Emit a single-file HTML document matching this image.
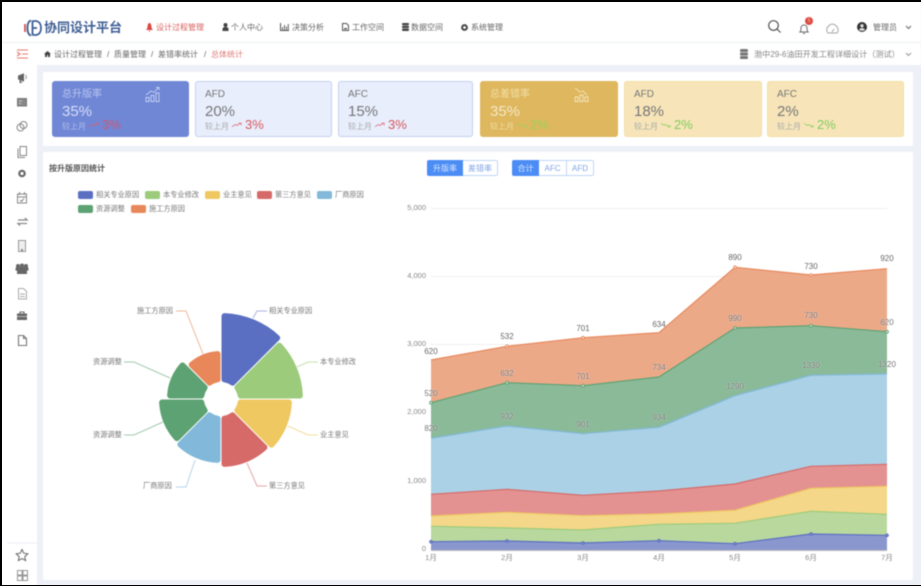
<!DOCTYPE html>
<html lang="zh"><head><meta charset="utf-8"><title>总体统计</title>
<style>
html,body{margin:0;padding:0;width:921px;height:586px;overflow:hidden;background:#000}
#w{position:absolute;left:2px;top:2px;width:919px;height:583px;background:#eef0f8;overflow:hidden;}
#a{position:absolute;left:-2px;top:-2px;width:921px;height:586px;filter:blur(.55px);font-family:"Liberation Sans","Noto Sans CJK SC",sans-serif;color:#666}
.b{position:absolute}
.t{position:absolute;white-space:nowrap;line-height:1}
.c{transform:translateX(-50%)}
.n{font-size:8px;color:#666}
.card{position:absolute;top:81px;width:137px;height:56px;box-sizing:border-box;border-radius:3px}
.blue{background:#e8eefc;box-shadow:inset 0 0 0 1px #c4d0ee}
.gold{background:#f7e5b9;box-shadow:inset 0 0 0 1px #f3dea6}
.l{font-size:10px;color:#777;left:10px;top:8.500px}
.v{font-size:15px;color:#777;left:10px;top:22.500px}
.m{font-size:8px;color:#aaa;left:10px;top:41.500px}
.p{font-size:13px;left:50px;top:37px}
.up{color:#d9585c}.dn{color:#82cc5e}
.ar{position:absolute;left:37px;top:41px}
.btn{position:absolute;top:160px;height:16px;box-sizing:border-box;border:1px solid #bfd6f7;font-size:8px;line-height:15px;text-align:center;color:#7fa3e6;background:#fff}
.on{background:#4c8df5;color:#dbe8fd;border-color:#4c8df5}
.ax{font-size:7.500px;color:#888}
.lg{font-size:7.200px;color:#777}
.sw{position:absolute;width:15px;height:8px;border-radius:2px}
.dl{color:#777;font-size:8px;text-shadow:0 0 1.500px rgba(255,255,255,.85)}
svg{position:absolute;overflow:visible}
</style></head><body>
<div id="w"><div id="a">
<!-- header -->
<div class="b" style="left:2px;top:2px;width:919px;height:40px;background:#fff;border-bottom:1px solid #eceef3"></div>
<div class="b" style="left:2px;top:43px;width:35px;height:542px;background:#fff"></div>
<div class="b" style="left:37px;top:43px;width:884px;height:22px;background:#fff"></div>
<svg style="left:24px;top:19px" width="18" height="18" viewBox="0 0 18 18" fill="none"><path d="M1 5V13" stroke="#d9534f" stroke-width="1.800"/><path d="M7 1.500C4.500 2 3.500 5 3.500 9s1 7 3.500 7.500" stroke="#3d5f96" stroke-width="1.800"/><path d="M8.500 1.500V16.500M9 2h2c5 0 6 4 6 7s-1 7-6 7H9M9 9h4" stroke="#3d5f96" stroke-width="1.800"/></svg>
<div class="t" style="left:44px;top:21px;font-size:13px;font-weight:700;color:#3f5f95">协同设计平台</div>
<svg style="left:146px;top:23px" width="7" height="9" viewBox="0 0 7 9"><path d="M3.500 0C2 0 1.700 2 1.500 4S.5 6 .2 7h6.600c-.3-1-1.100-1-1.300-3S5 0 3.500 0zM2.500 7.700h2L3.500 9z" fill="#d9483f"/></svg>
<div class="t n" style="left:156px;top:23.500px;color:#d9605c">设计过程管理</div>
<svg style="left:222px;top:23px" width="7" height="8" viewBox="0 0 7 8"><circle cx="3.500" cy="2" r="2" fill="#444"/><path d="M.5 8V6C.5 4.500 2 4 3.500 4s3 .5 3 2v2z" fill="#444"/></svg>
<div class="t n" style="left:231px;top:23.500px">个人中心</div>
<svg style="left:280px;top:23px" width="9" height="8" viewBox="0 0 9 8"><path d="M.5 0V7.500H9" stroke="#555" fill="none"/><path d="M2 7V4h1v3zM4 7V2h1v5zM6 7V3.500h1V7zM7.800 7V1h1v6z" fill="#666"/></svg>
<div class="t n" style="left:292px;top:23.500px">决策分析</div>
<svg style="left:342px;top:23px" width="7" height="8" viewBox="0 0 7 8"><path d="M.5.500h4l2 2V7.500H.5z" fill="#fff" stroke="#555"/><path d="M1.500 6.500l1.500-2 1 1 1-1v2z" fill="#555"/></svg>
<div class="t n" style="left:352px;top:23.500px">工作空间</div>
<svg style="left:402px;top:23px" width="7" height="8" viewBox="0 0 7 8"><rect width="7" height="2.300" rx="1" fill="#444"/><rect y="2.800" width="7" height="2.300" rx="1" fill="#444"/><rect y="5.600" width="7" height="2.400" rx="1" fill="#444"/></svg>
<div class="t n" style="left:411px;top:23.500px">数据空间</div>
<svg style="left:461px;top:24px" width="7" height="7" viewBox="0 0 7 7"><circle cx="3.500" cy="3.500" r="2.400" fill="none" stroke="#444" stroke-width="2"/></svg>
<div class="t n" style="left:471px;top:23.500px">系统管理</div>
<!-- right header -->
<svg style="left:768px;top:20px" width="14" height="14" viewBox="0 0 14 14" fill="none" stroke="#555" stroke-width="1.200"><circle cx="5.500" cy="5.500" r="4.800"/><path d="M9 9l3.500 3.500"/></svg>
<svg style="left:799px;top:23px" width="10" height="12" viewBox="0 0 10 12" fill="none" stroke="#666"><path d="M1 9c1-1 1-2 1-4s1.500-3 3-3 3 1 3 3 0 3 1 4zM4 10.500h2"/></svg>
<div class="b" style="left:805px;top:17px;width:8px;height:8px;border-radius:50%;background:#dc4a3c;color:#fbc;font-size:5px;line-height:8px;text-align:center">5</div>
<svg style="left:826px;top:23px" width="13" height="11" viewBox="0 0 13 11" fill="none" stroke="#a5a5a5" stroke-width="1"><path d="M2 10C0 8 .5 4 3 3c1-2 5-3 7 0 2 1 3 5 1 7z"/><path d="M6 9l2-3M4 10h5" /></svg>
<svg style="left:857px;top:22px" width="10" height="10" viewBox="0 0 10 10"><circle cx="5" cy="5" r="5" fill="#333"/><circle cx="5" cy="3.800" r="1.700" fill="#ddd"/><path d="M2 8c.5-1.500 1.800-2 3-2s2.500.5 3 2c-1.500 1-4.500 1-6 0z" fill="#ddd"/></svg>
<div class="t n" style="left:873px;top:23.500px;color:#666">管理员</div>
<svg style="left:905px;top:25px" width="7" height="5" viewBox="0 0 7 5" fill="none" stroke="#666"><path d="M1 1l2.500 2.500L6 1"/></svg>
<!-- breadcrumb -->
<svg style="left:44px;top:51px" width="7" height="6" viewBox="0 0 7 6"><path d="M3.500 0L7 3H6v3H4V4H3v2H1V3H0z" fill="#444"/></svg>
<div class="t n" style="left:54px;top:50.500px">设计过程管理</div><div class="t n" style="left:107px;top:50.500px">/</div>
<div class="t n" style="left:114px;top:50.500px">质量管理</div><div class="t n" style="left:151px;top:50.500px">/</div>
<div class="t n" style="left:158px;top:50.500px">差错率统计</div><div class="t n" style="left:204px;top:50.500px">/</div>
<div class="t n" style="left:211px;top:50.500px;color:#dc7b76">总体统计</div>
<svg style="left:740px;top:49px" width="8" height="10" viewBox="0 0 8 10"><rect width="8" height="3" rx="1.300" fill="#777"/><rect y="3.500" width="8" height="3" rx="1" fill="#777"/><rect y="7" width="8" height="3" rx="1.300" fill="#777"/></svg>
<div class="t" style="left:754px;top:50.500px;font-size:8.100px;color:#888">渤中29-6油田开发工程详细设计（测试）</div>
<svg style="left:905px;top:52px" width="7" height="5" viewBox="0 0 7 5" fill="none" stroke="#999"><path d="M1 1l2.500 2.500L6 1"/></svg>
<!-- sidebar -->
<svg style="left:0;top:0" width="44" height="586" fill="none" stroke="#777" stroke-width="1">
<g stroke="#e8776e"><path d="M17 50h11M22 54h6M17 58h11M17 52l3 2-3 2" stroke-width="1.100"/></g>
<path d="M18.500 76v3l5 2v-7zM20 80v2.500h2" fill="#666" stroke="#666"/><path d="M25.500 75c1.200 1 1.200 3 0 4" stroke="#999"/>
<rect x="17.500" y="98.500" width="9" height="7.500" fill="#888" stroke="#777"/><path d="M19 101h3M19 103.500h2" stroke="#ddd" stroke-width=".8"/>
<circle cx="20.500" cy="127.500" r="3.500" stroke="#888"/><circle cx="23.500" cy="125" r="3.500" stroke="#888"/>
<path d="M20 146.500h6.500v9H20z" stroke="#888"/><path d="M18 148.500v9h7" stroke="#888"/>
<circle cx="22" cy="173.500" r="2.700" stroke-width="2.200" stroke="#666"/>
<path d="M17.500 194h9v9h-9zM19.500 192v3M24.500 192v3M17.500 197h9M20 200l1.500 1.500 2.500-3" stroke="#888"/>
<path d="M18 220h9l-2-2M27 223.500h-9l2 2" stroke-width="1.300" stroke="#888"/>
<path d="M18.500 240.500h7v11h-7z" stroke="#999" fill="#eee"/><path d="M21 249h2v2h-2z" fill="#888" stroke="none"/>
<g fill="#666" stroke="none"><circle cx="18" cy="266" r="2"/><circle cx="26" cy="266" r="2"/><circle cx="22" cy="265.500" r="2"/><path d="M17 274v-3c0-1.500 0-4 5-4s5 2.500 5 4v3z"/><path d="M15.500 270.500v-2c0-1 1-1.500 2-1.500h9c1 0 2 .5 2 1.500v2z"/></g>
<path d="M18.500 288.500h5l3 3v7.500h-8zM20 294h5M20 296.500h5" stroke="#aaa"/>
<path d="M17 313.500h10v6.500H17z" fill="#666" stroke="none"/><path d="M20 313.500v-1.500h4v1.500" stroke="#666"/><path d="M17 316.500h10" stroke="#ddd" stroke-width=".7"/>
<path d="M18.500 335.500h5l3 3v7h-8zM23.500 335.500v3h3" stroke-width="1.100" stroke="#777"/>
<path d="M22 549.500l1.800 3.700 4 .6-3 2.800.8 4-3.600-2-3.600 2 .8-4-3-2.800 4-.6z" stroke="#666"/>
<g stroke="#999"><rect x="17.500" y="570.500" width="4.500" height="4.500"/><rect x="23" y="570.500" width="4.500" height="4.500"/><rect x="17.500" y="576" width="4.500" height="4.500"/><rect x="23" y="576" width="4.500" height="4.500"/></g>
<path d="M7 543h30" stroke="#eceef3"/>
</svg>
<!-- panels -->
<div class="b" style="left:43px;top:72px;width:870px;height:74px;background:#fff;border-radius:2px"></div>
<div class="b" style="left:43px;top:152px;width:870px;height:428px;background:#fff;border-radius:2px"></div>
<!-- cards -->
<div class="card" style="left:52px;background:#7087d6">
<div class="t l" style="color:#b9c5ee">总升版率</div><div class="t v" style="color:#d7def6">35%</div><div class="t m" style="color:#aebbe9">较上月</div>
<svg class="ar" width="10" height="6" viewBox="0 0 12 6" fill="none" stroke="#d9606c"><path d="M0 5l4-2.500 2 1L10 1M8 .8h3v2.500"/></svg>
<div class="t p" style="color:#cc5a72">3%</div>
<svg style="left:93px;top:5px" width="15" height="16" viewBox="0 0 15 16" fill="none" stroke="#c7d1f2" stroke-width=".9"><path d="M1 9l5-4 3 1.500L13 2M11 1.500h3V4"/><path d="M1 11.500h3v4H1zM6 9.500h3v6H6zM11 7h3v8.500h-3z"/></svg>
</div>
<div class="card blue" style="left:195px"><div class="t l">AFD</div><div class="t v">20%</div><div class="t m">较上月</div>
<svg class="ar" width="10" height="6" viewBox="0 0 12 6" fill="none" stroke="#e0696c"><path d="M0 5l4-2.500 2 1L10 1M8 .8h3v2.500"/></svg><div class="t p up">3%</div></div>
<div class="card blue" style="left:338px;width:135px"><div class="t l">AFC</div><div class="t v">15%</div><div class="t m">较上月</div>
<svg class="ar" width="10" height="6" viewBox="0 0 12 6" fill="none" stroke="#e0696c"><path d="M0 5l4-2.500 2 1L10 1M8 .8h3v2.500"/></svg><div class="t p up">3%</div></div>
<div class="card" style="left:480px;width:138px;background:#deb75e">
<div class="t l" style="color:#f3dfa8">总差错率</div><div class="t v" style="color:#f5e8c6">35%</div><div class="t m" style="color:#f0dca4">较上月</div>
<svg class="ar" width="10" height="6" viewBox="0 0 12 6" fill="none" stroke="#9ed05e"><path d="M0 1l4 2.500 2-1L10 5M8 5.200h3V3"/></svg>
<div class="t p" style="color:#9ad35c">2%</div>
<svg style="left:94px;top:6px" width="15" height="15" viewBox="0 0 15 15" fill="none" stroke="#f5e7c0" stroke-width=".9"><path d="M1 1l5 4 3-1 4 4"/><path d="M1 10h3v4.500H1zM6 8h3v6.500H6zM11 10h3v4.500h-3z"/></svg>
</div>
<div class="card gold" style="left:624px;width:138px"><div class="t l">AFD</div><div class="t v">18%</div><div class="t m">较上月</div>
<svg class="ar" width="10" height="6" viewBox="0 0 12 6" fill="none" stroke="#8ccf63"><path d="M0 1l4 2.500 2-1L10 5M8 5.200h3V3"/></svg><div class="t p dn">2%</div></div>
<div class="card gold" style="left:767px;width:137px"><div class="t l">AFC</div><div class="t v">2%</div><div class="t m">较上月</div>
<svg class="ar" width="10" height="6" viewBox="0 0 12 6" fill="none" stroke="#8ccf63"><path d="M0 1l4 2.500 2-1L10 5M8 5.200h3V3"/></svg><div class="t p dn">2%</div></div>
<!-- title -->
<div class="t" style="left:49px;top:164.500px;font-size:8px;font-weight:700;color:#555">按升版原因统计</div>
<!-- legend -->
<div class="sw" style="left:78px;top:191px;background:#5b6fc2"></div><div class="t lg" style="left:96px;top:191px">相关专业原因</div>
<div class="sw" style="left:145px;top:191px;background:#9ccb7b"></div><div class="t lg" style="left:163px;top:191px">本专业修改</div>
<div class="sw" style="left:205px;top:191px;background:#efc862"></div><div class="t lg" style="left:223px;top:191px">业主意见</div>
<div class="sw" style="left:257px;top:191px;background:#d66a69"></div><div class="t lg" style="left:275px;top:191px">第三方意见</div>
<div class="sw" style="left:317px;top:191px;background:#82b9da"></div><div class="t lg" style="left:335px;top:191px">厂商原因</div>
<div class="sw" style="left:78px;top:205px;background:#5da272"></div><div class="t lg" style="left:96px;top:205px">资源调整</div>
<div class="sw" style="left:131px;top:205px;background:#e8875a"></div><div class="t lg" style="left:149px;top:205px">施工方原因</div>
<!-- rose -->
<svg style="left:221px;top:399px" width="1" height="1" stroke-width="6" stroke-linejoin="round">
<path transform="rotate(0)" fill="#5b6fc2" stroke="#5b6fc2" d="M3.500-82.900A83 83 0 0 1 56.200-61.100L11.500-16.400A20 20 0 0 0 3.500-19.700Z"/>
<path transform="rotate(45)" fill="#9ccb7b" stroke="#9ccb7b" d="M3.500-78.900A79 79 0 0 1 53.300-58.300L11.500-16.400A20 20 0 0 0 3.500-19.700Z"/>
<path transform="rotate(90)" fill="#efc862" stroke="#efc862" d="M3.500-67.900A68 68 0 0 1 45.600-50.500L11.500-16.400A20 20 0 0 0 3.500-19.700Z"/>
<path transform="rotate(135)" fill="#d66a69" stroke="#d66a69" d="M3.500-64.900A65 65 0 0 1 43.400-48.400L11.500-16.400A20 20 0 0 0 3.500-19.700Z"/>
<path transform="rotate(180)" fill="#82b9da" stroke="#82b9da" d="M3.500-60.900A61 61 0 0 1 40.600-45.500L11.500-16.400A20 20 0 0 0 3.500-19.700Z"/>
<path transform="rotate(225)" fill="#5da272" stroke="#5da272" d="M3.500-58.900A59 59 0 0 1 39.200-44.100L11.500-16.400A20 20 0 0 0 3.500-19.700Z"/>
<path transform="rotate(270)" fill="#5da272" stroke="#5da272" d="M3.500-50.900A51 51 0 0 1 33.500-38.500L11.500-16.400A20 20 0 0 0 3.500-19.700Z"/>
<path transform="rotate(315)" fill="#e8875a" stroke="#e8875a" d="M3.500-44.900A45 45 0 0 1 29.300-34.200L11.500-16.400A20 20 0 0 0 3.500-19.700Z"/>
</svg>
<svg style="left:0;top:0" width="921" height="586" fill="none" stroke-width="1">
<path d="M253 318l4-7h10" stroke="#aab4e0"/><path d="M297 367l11-5h10" stroke="#c5e0b0"/><path d="M288 426l20 9h10" stroke="#f4dd9f"/><path d="M247 463l10 23h10" stroke="#e6a6a5"/><path d="M195 460l-9 27h-10" stroke="#b3d5e9"/><path d="M163 422l-29 13h-10" stroke="#a3cbad"/><path d="M170 378l-36-16h-10" stroke="#a3cbad"/><path d="M203 354l-17-43h-10" stroke="#f0b799"/>
</svg>
<div class="t lg" style="left:269px;top:307px">相关专业原因</div>
<div class="t lg" style="left:320px;top:358px">本专业修改</div>
<div class="t lg" style="left:320px;top:431px">业主意见</div>
<div class="t lg" style="left:269px;top:482px">第三方意见</div>
<div class="t lg" style="left:143px;top:482px">厂商原因</div>
<div class="t lg" style="left:93px;top:431px">资源调整</div>
<div class="t lg" style="left:93px;top:358px">资源调整</div>
<div class="t lg" style="left:137px;top:307px">施工方原因</div>
<!-- buttons -->
<div class="btn on" style="left:427px;width:36px;border-radius:2px 0 0 2px">升版率</div>
<div class="btn" style="left:463px;width:35px;border-radius:0 2px 2px 0;border-left:0">差错率</div>
<div class="btn on" style="left:512px;width:27px;border-radius:2px 0 0 2px">合计</div>
<div class="btn" style="left:539px;width:28px;border-left:0">AFC</div>
<div class="btn" style="left:566px;width:28px;border-radius:0 2px 2px 0">AFD</div>
<!-- area chart -->
<svg style="left:0;top:0" width="921" height="586" stroke-linejoin="round">
<path d="M431 208.500H887M431 276.500H887M431 344.500H887M431 412.500H887M431 481.500H887" stroke="#efefef" fill="none"/>
<path d="M431 360L507 346.300 583 337.700 659 332.700 735 267.300 811 275 887 268.700V550H431Z" fill="#eca988"/>
<path d="M431 402.700L507 382.700 583 385.700 659 377 735 328 811 325.700 887 331.700V550H431Z" fill="#8bba99"/>
<path d="M431 438.300L507 426 583 433.700 659 427.300 735 395.700 811 375.300 887 374V550H431Z" fill="#abd1e6"/>
<path d="M431 494.300L507 489.300 583 495.300 659 491 735 484 811 466.300 887 464.300V550H431Z" fill="#e39291"/>
<path d="M431 516L507 512.300 583 515.700 659 514 735 510.300 811 488.300 887 486.300V550H431Z" fill="#f4d788"/>
<path d="M431 526.300L507 528 583 530 659 524.300 735 523.300 811 511.300 887 514.300V550H431Z" fill="#b9d89e"/>
<path d="M431 541.700L507 541 583 543 659 540.700 735 543.700 811 534 887 535.300V550H431Z" fill="#8a97cf"/>
<g fill="none" stroke-width="1.200">
<path d="M431 360L507 346.300 583 337.700 659 332.700 735 267.300 811 275 887 268.700" stroke="#e8875a"/>
<path d="M431 402.700L507 382.700 583 385.700 659 377 735 328 811 325.700 887 331.700" stroke="#5da272"/>
<path d="M431 438.300L507 426 583 433.700 659 427.300 735 395.700 811 375.300 887 374" stroke="#82b9da"/>
<path d="M431 494.300L507 489.300 583 495.300 659 491 735 484 811 466.300 887 464.300" stroke="#d66a69"/>
<path d="M431 516L507 512.300 583 515.700 659 514 735 510.300 811 488.300 887 486.300" stroke="#efc862"/>
<path d="M431 526.300L507 528 583 530 659 524.300 735 523.300 811 511.300 887 514.300" stroke="#9ccb7b"/>
<path d="M431 541.700L507 541 583 543 659 540.700 735 543.700 811 534 887 535.300" stroke="#5b6fc2"/>
<path d="M431 550.500H887" stroke="#bbb" stroke-width="1"/>
</g>
<g fill="#fff" stroke-width="1">
<g stroke="#e8875a"><circle cx="507" cy="346.300" r="1.300"/><circle cx="583" cy="337.700" r="1.300"/><circle cx="735" cy="267.300" r="1.300"/><circle cx="811" cy="275" r="1.300"/></g>
<g stroke="#5da272"><circle cx="431" cy="402.700" r="1.300"/><circle cx="507" cy="382.700" r="1.300"/><circle cx="583" cy="385.700" r="1.300"/><circle cx="735" cy="328" r="1.300"/><circle cx="811" cy="325.700" r="1.300"/><circle cx="887" cy="331.700" r="1.300"/></g>
<g fill="#8a97cf" stroke="#5b6fc2"><circle cx="431" cy="541.700" r="1.300"/><circle cx="507" cy="541" r="1.300"/><circle cx="583" cy="543" r="1.300"/><circle cx="659" cy="540.700" r="1.300"/><circle cx="735" cy="543.700" r="1.300"/><circle cx="811" cy="534" r="1.300"/><circle cx="887" cy="535.300" r="1.300"/></g>
</g>
</svg>
<div class="t ax" style="right:495px;top:204px">5,000</div>
<div class="t ax" style="right:495px;top:272px">4,000</div>
<div class="t ax" style="right:495px;top:340px">3,000</div>
<div class="t ax" style="right:495px;top:408px">2,000</div>
<div class="t ax" style="right:495px;top:477px">1,000</div>
<div class="t ax" style="right:495px;top:545px">0</div>
<div class="t ax c" style="left:431px;top:554px">1月</div><div class="t ax c" style="left:507px;top:554px">2月</div><div class="t ax c" style="left:583px;top:554px">3月</div><div class="t ax c" style="left:659px;top:554px">4月</div><div class="t ax c" style="left:735px;top:554px">5月</div><div class="t ax c" style="left:811px;top:554px">6月</div><div class="t ax c" style="left:887px;top:554px">7月</div>
<!-- data labels -->
<div class="dl" style="color:#666">
<div class="t c" style="left:431px;top:348px">620</div><div class="t c" style="left:507px;top:333px">532</div><div class="t c" style="left:583px;top:325px">701</div><div class="t c" style="left:659px;top:321px">634</div><div class="t c" style="left:735px;top:254px">890</div><div class="t c" style="left:811px;top:263px">730</div><div class="t c" style="left:887px;top:255px">920</div>
</div>
<div class="dl">
<div class="t c" style="left:431px;top:390px">520</div><div class="t c" style="left:507px;top:370px">632</div><div class="t c" style="left:583px;top:373px">701</div><div class="t c" style="left:659px;top:364px">734</div><div class="t c" style="left:735px;top:315px">990</div><div class="t c" style="left:811px;top:312px">730</div><div class="t c" style="left:887px;top:319px">620</div>
<div class="t c" style="left:431px;top:425px">820</div><div class="t c" style="left:507px;top:413px">932</div><div class="t c" style="left:583px;top:421px">901</div><div class="t c" style="left:659px;top:414px">934</div><div class="t c" style="left:735px;top:383px">1290</div><div class="t c" style="left:811px;top:362px">1330</div><div class="t c" style="left:887px;top:361px">1320</div>
</div>
</div></div>
</body></html>
